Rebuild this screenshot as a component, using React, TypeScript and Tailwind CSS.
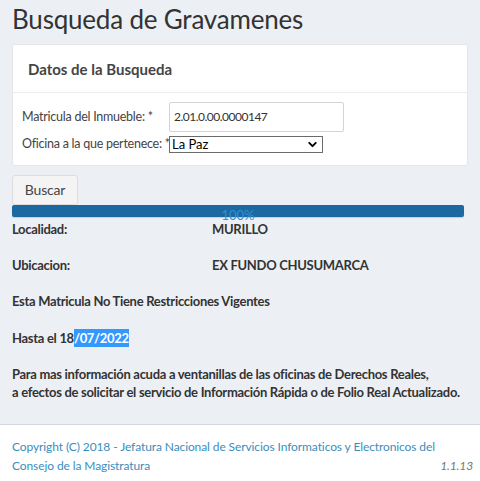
import { ChevronDown } from 'lucide-react';

const font = { fontFamily: 'Lato, "Noto Sans", sans-serif' };

function InfoRow({ label, value }: { label: string; value: string }) {
  return (
    <div className="flex h-[18px] items-center">
      <span className="w-[200px]">{label}</span>
      <span>{value}</span>
    </div>
  );
}

export default function App() {
  return (
    <div className="min-h-screen flex flex-col bg-[#ecf0f5] text-[#333]" style={font}>
      <div className="flex-1 px-3">
        <h1 className="text-[26px] tracking-[-0.2px] leading-[36px] pt-[1px] text-[#333]">Busqueda de Gravamenes</h1>

        {/* Datos de la Busqueda */}
        <div className="mt-[7px] bg-white rounded-[3px] border border-[#e4e6ea]">
          <div className="h-[48px] flex items-center px-[15px] border-b border-[#ececec]">
            <h3 className="text-[15px] font-bold text-[#444] mt-[1px]">Datos de la Busqueda</h3>
          </div>
          <div className="pt-[9px] pb-[11px] pl-[9px] text-[12.5px] tracking-[-0.25px] text-[#444]">
            <div className="flex items-center">
              <label className="w-[147px] shrink-0">Matricula del Inmueble: *</label>
              <div className="w-[175px] h-[30px] border border-[#d4d4d4] rounded-[2px] flex items-center px-[4px] text-[12px] tracking-[-0.5px] text-[#333]">
                2.01.0.00.0000147
              </div>
            </div>
            <div className="flex items-center mt-[3px]">
              <label className="w-[147px] shrink-0 whitespace-nowrap">Oficina a la que pertenece: *</label>
              <div className="w-[154px] h-[17px] border border-[#6b6b6b] flex items-center justify-between pl-[2px] pr-[3px] text-[13px] tracking-normal text-black">
                <span>La Paz</span>
                <ChevronDown className="w-[13px] h-[13px]" strokeWidth={3.5} />
              </div>
            </div>
          </div>
        </div>

        <button className="mt-[9px] w-[66px] h-[30px] bg-[#f4f4f4] border border-[#ddd] rounded-[3px] text-[14px] tracking-[-0.2px] text-[#444]">
          Buscar
        </button>

        {/* Progress */}
        <div className="relative w-[452px] h-[12px] rounded-[2px] bg-[#1b69a0] shadow-[0_1px_1px_rgba(0,0,0,0.15)]">
          <span className="absolute left-0 right-0 top-0 text-center text-[13px] leading-[20px] text-[#2f8fd8]">100%</span>
        </div>

        <div className="mt-[4px] text-[13px] tracking-[-0.3px] font-bold text-[#333] flex flex-col gap-[18px]">
          <InfoRow label="Localidad:" value="MURILLO" />
          <InfoRow label="Ubicacion:" value="EX FUNDO CHUSUMARCA" />
          <div className="h-[18px] flex items-center">Esta Matricula No Tiene Restricciones Vigentes</div>
          <div className="h-[18px] leading-[18px]">
            Hasta el 18<span className="inline-block bg-[#3399ff] text-white">/07/2022</span>
          </div>
          <div className="leading-[18px]">
            Para mas información acuda a ventanillas de las oficinas de Derechos Reales,
            <br />
            a efectos de solicitar el servicio de Información Rápida o de Folio Real Actualizado.
          </div>
        </div>
      </div>

      <footer className="h-[57px] bg-white border-t border-[#d2d6de] pl-3 pr-[7px] pt-[12px] text-[12px] tracking-[-0.1px] leading-[19px] text-[#3c8dbc]">
        <div className="whitespace-nowrap">Copyright (C) 2018 - Jefatura Nacional de Servicios Informaticos y Electronicos del</div>
        <div className="flex justify-between">
          <span>Consejo de la Magistratura</span>
          <span className="italic text-[#777]">1.1.13</span>
        </div>
      </footer>
    </div>
  );
}
